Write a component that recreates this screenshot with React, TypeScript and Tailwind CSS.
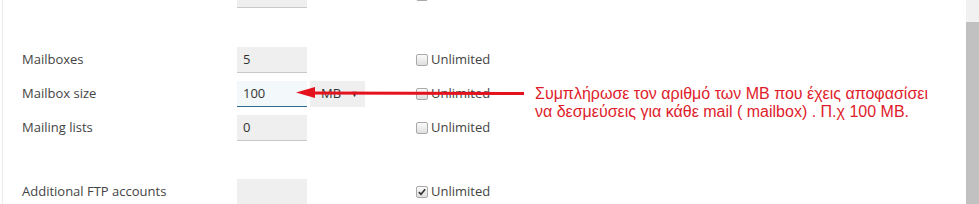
import React from "react";

const font = { fontFamily: '"Open Sans", "Liberation Sans", sans-serif' };

function Checkbox({ checked }: { checked?: boolean }) {
  return (
    <span className="relative inline-flex h-[12px] w-[12px] items-center justify-center rounded-[2px] border border-[#a9a9a9] bg-gradient-to-b from-[#fbfbfb] to-[#dedede]">
      {checked && (
        <svg viewBox="0 0 12 12" className="h-[10px] w-[10px]">
          <path d="M2.2 6.2 L4.8 8.8 L9.8 2.8" fill="none" stroke="#333" strokeWidth="2" />
        </svg>
      )}
    </span>
  );
}

function Row({
  label,
  value,
  checked,
  active,
  select,
  className = "",
}: {
  label: string;
  value?: string;
  checked?: boolean;
  active?: boolean;
  select?: boolean;
  className?: string;
}) {
  return (
    <div className={`flex h-[26px] items-center ${className}`}>
      <div className="w-[234px] pl-[19px] text-[13px] text-[#444]">{label}</div>
      <div
        className={`flex h-[26px] w-[70px] items-center pl-[6px] text-[13px] text-[#333] border-b ${
          active ? "bg-[#f3f8fa] border-[#2f6b8c]" : "bg-[#efefef] border-[#c9c9c9]"
        }`}
      >
        {value}
      </div>
      <div className="ml-[3px] w-[106px]">
        {select && (
          <div className="flex h-[26px] w-[55px] items-center justify-between bg-[#efefef] pl-[11px] pr-[6px] text-[13px] text-[#333]">
            <span>MB</span>
            <span className="text-[9px]">▼</span>
          </div>
        )}
      </div>
      <div className="flex items-center gap-[3px] text-[13px] text-[#444]">
        <Checkbox checked={checked} />
        <span>Unlimited</span>
      </div>
    </div>
  );
}

export default function App() {
  return (
    <div className="flex h-[204px] w-[979px] overflow-hidden bg-white" style={font}>
      <div className="relative ml-[2px] flex-1 border-l border-[#ececec]">
        <div className="-mt-[18px] flex flex-col">
          <Row label="" value="" className="" />
          <Row label="Mailboxes" value="5" className="mt-[39px]" />
          <Row label="Mailbox size" value="100" active select className="mt-[8px]" />
          <Row label="Mailing lists" value="0" className="mt-[8px]" />
          <Row label="Additional FTP accounts" value="" checked className="mt-[38px]" />
        </div>

        <svg
          className="absolute left-[292px] top-[84px]"
          width="234"
          height="20"
          viewBox="0 0 234 20"
        >
          <line x1="16" y1="9" x2="229" y2="9.6" stroke="#e3121c" strokeWidth="3" />
          <polygon points="1,8.5 20,3 20,14" fill="#e3121c" />
        </svg>

        <div
          className="absolute left-[532px] top-[85px] text-[16px] leading-[18px] text-[#de1c2b]"
          style={{ fontFamily: '"Liberation Sans", Arial, sans-serif' }}
        >
          <div>Συμπλήρωσε τον αριθμό των MB που έχεις αποφασίσει</div>
          <div>να δεσμεύσεις για κάθε mail ( mailbox) . Π.χ 100 MB.</div>
        </div>
      </div>
      <div className="flex w-[13px] flex-col">
        <div className="h-[22px] bg-[#f1f1f1]" />
        <div className="flex-1 bg-[#c1c1c1]" />
      </div>
    </div>
  );
}
